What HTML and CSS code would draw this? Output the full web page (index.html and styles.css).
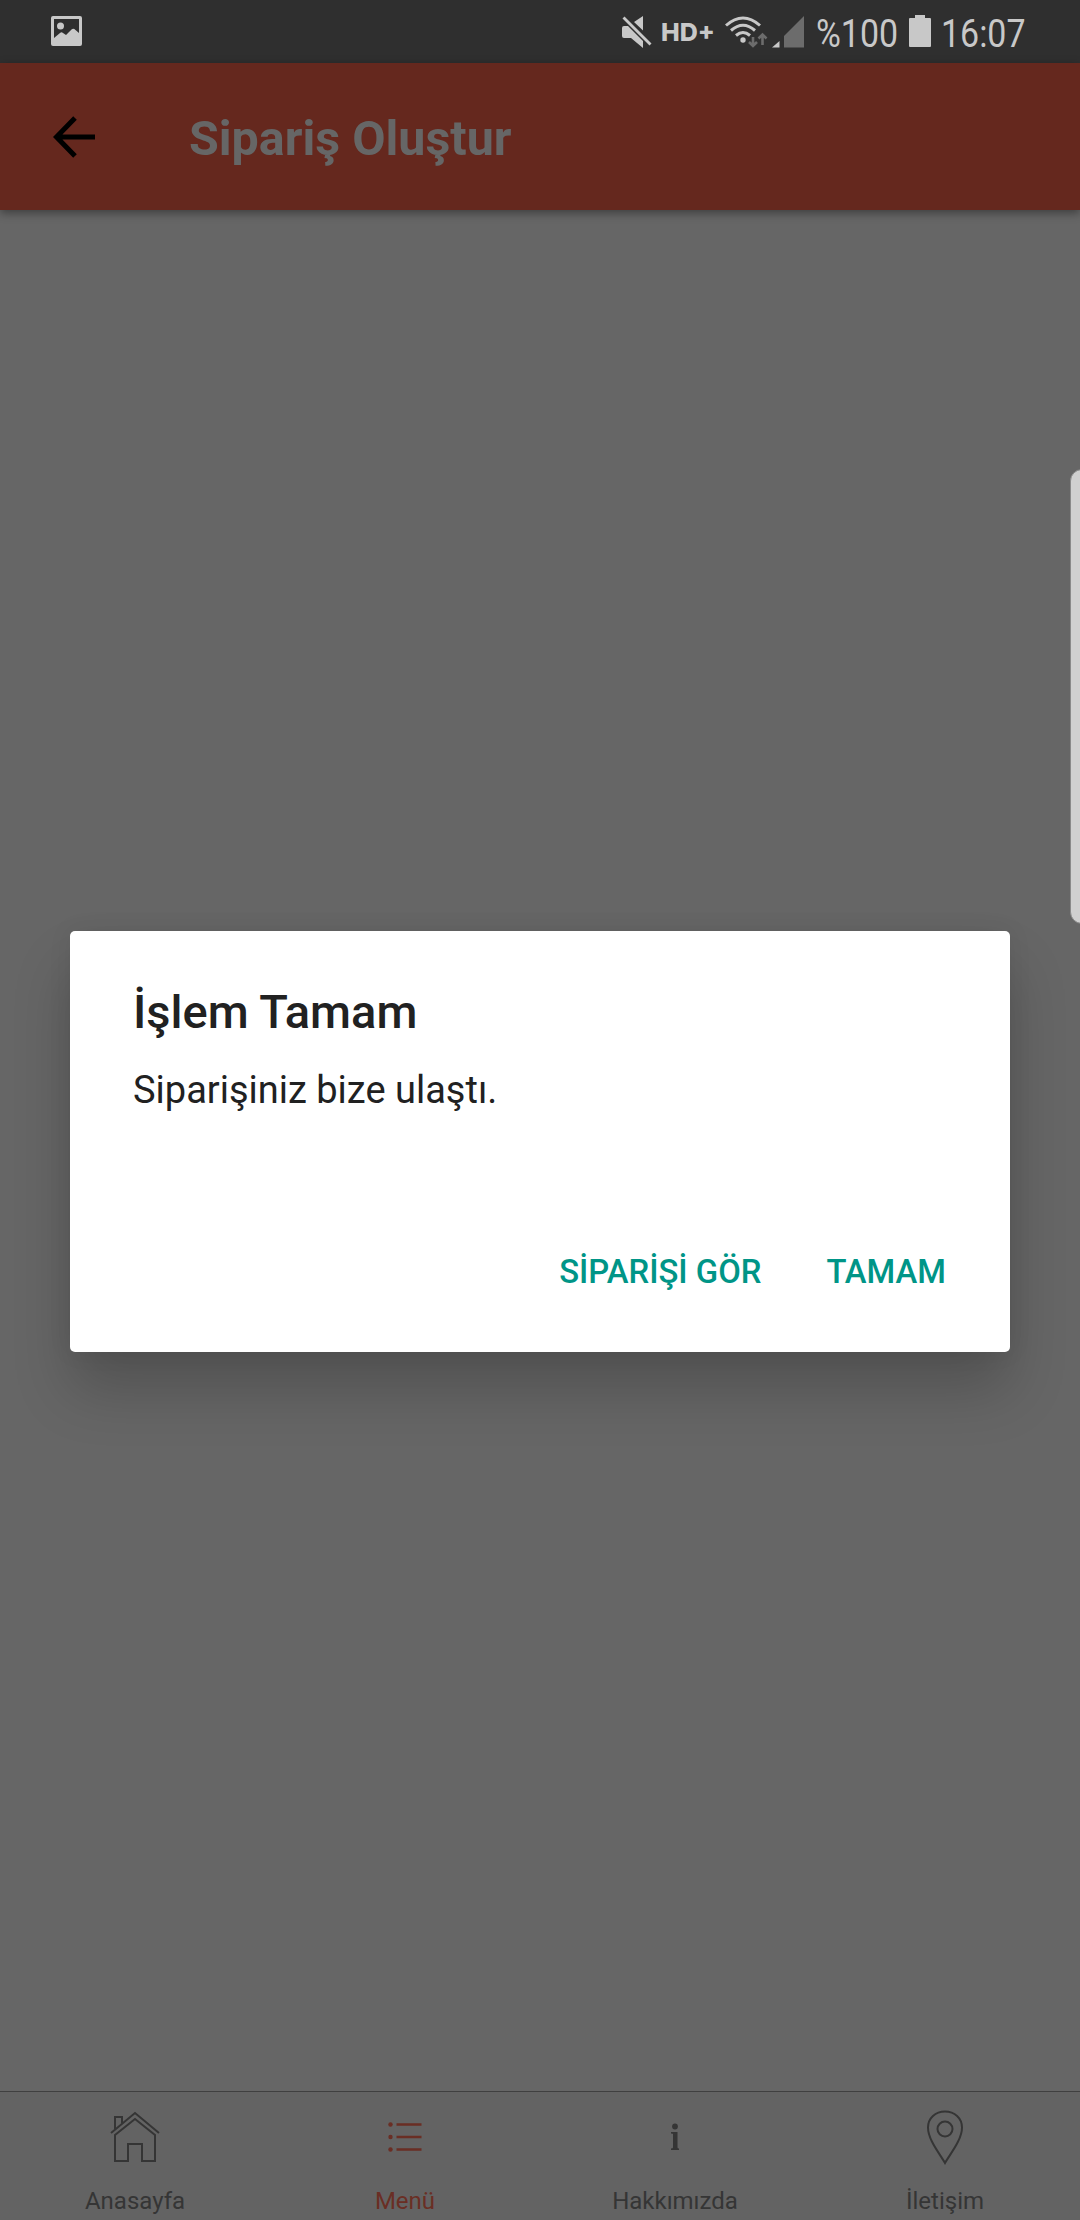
FILE: index.html
```html
<!DOCTYPE html>
<html lang="tr">
<head>
<meta charset="utf-8">
<title>Sipariş Oluştur</title>
<link rel="stylesheet" href="styles.css">
</head>
<body>
<div class="screen">
  <div class="status-bar">
    <svg class="icon-picture" width="31" height="30" viewBox="0 0 31 30"><path fill-rule="evenodd" d="M2 0H29Q31 0 31 2V28Q31 30 29 30H2Q0 30 0 28V2Q0 0 2 0ZM3 3V22L9 17Q10.500 15.500 12 17L15 19L20.500 13.500Q22.500 12 24.500 14L28 17V3Z"/><circle cx="9.500" cy="10" r="3.500"/></svg>
    <div class="status-right">
      <svg class="icon-mute" width="30" height="32" viewBox="0 0 30 32"><path d="M0 12Q0 10 2 10H6L21 25V32L9 22H2Q0 22 0 20ZM12 6L21 0V14.500Z"/><path d="M1.500 1.500L28.500 28.500" fill="none" stroke="#c8c8c8" stroke-width="2.800"/></svg>
      <span class="hd">HD+</span>
      <svg class="icon-wifi" width="43" height="32" viewBox="0 0 43 32"><g fill="none" stroke="#c8c8c8" stroke-width="3"><path d="M1 9.500Q18 -5.500 35 9.500"/><path d="M6 14.500Q18 4 30 14.500"/><path d="M11 19.500Q18 13.500 25 19.500"/></g><circle cx="18" cy="24" r="2.700"/><g fill="none" stroke="#6c6c6c" stroke-width="2.600"><path d="M28 21V30M24 26L28 30L32 26M37.500 29V19M33.500 22.500L37.500 18.500L41.500 22.500"/></g></svg>
      <svg class="icon-signal" width="32" height="32" viewBox="0 0 32 32"><path d="M0 31.500L7.500 25V31.500Z"/><path fill="#6c6c6c" d="M12 31.500V20L32 0V31.500Z"/></svg>
      <span class="battery-text"><span class="narrow">%100</span></span>
      <svg class="icon-battery" width="22" height="32" viewBox="0 0 22 32"><path d="M6 0H16V3H21Q22 3 22 4V31Q22 32 21 32H1Q0 32 0 31V4Q0 3 1 3H6Z"/></svg>
      <span class="clock"><span class="narrow">16:07</span></span>
    </div>
  </div>
  <header class="app-bar">
    <svg class="icon-back" width="42" height="42" viewBox="0 0 42 42"><path d="M22 2L3.500 21L22 40M3 21H42" fill="none" stroke="#000" stroke-width="5"/></svg>
    <h1 class="app-title">Sipariş Oluştur</h1>
  </header>
  <main class="content"></main>
  <nav class="tabs">
    <div class="tab">
      <div class="tab-icon"><svg width="50" height="52" viewBox="0 0 50 52" fill="none" stroke="#353535" stroke-width="2"><path d="M1 22L25 2L49 22M5 18V6H12V12M5 24V50H18V33H32V50H45V24L25 8Z"/></svg></div>
      <span class="tab-label">Anasayfa</span>
    </div>
    <div class="tab active">
      <div class="tab-icon"><svg width="34" height="32" viewBox="0 0 34 32"><g fill="#6a2e24"><circle cx="2.500" cy="3.500" r="2.200"/><circle cx="2.500" cy="16" r="2.200"/><circle cx="2.500" cy="28.500" r="2.200"/></g><path d="M8.500 3.500H33.500M8.500 16H33.500M8.500 28.500H33.500" stroke="#6a2e24" stroke-width="2.500"/></svg></div>
      <span class="tab-label">Menü</span>
    </div>
    <div class="tab">
      <div class="tab-icon"><svg width="10" height="28" viewBox="0 0 10 28" fill="#353535"><circle cx="5" cy="3.500" r="2.900"/><path d="M1 9H7.500V24.500Q7.500 25.500 9 25.500V27H1V25.500Q3 25.500 3 24.500V11Q3 10.500 1 10.500Z"/></svg></div>
      <span class="tab-label">Hakkımızda</span>
    </div>
    <div class="tab">
      <div class="tab-icon"><svg width="38" height="56" viewBox="0 0 38 56" fill="none" stroke="#353535" stroke-width="2"><path d="M19 54C14 45 2 31 2 18.500C2 9 9.500 2.500 19 2.500S36 9 36 18.500C36 31 24 45 19 54Z"/><circle cx="19" cy="20" r="7.500"/></svg></div>
      <span class="tab-label">İletişim</span>
    </div>
  </nav>
  <div class="overlay">
    <section class="dialog">
      <h2 class="dialog-title">İşlem Tamam</h2>
      <p class="dialog-message">Siparişiniz bize ulaştı.</p>
      <div class="dialog-actions">
        <span class="action">SİPARİŞİ GÖR</span>
        <span class="action">TAMAM</span>
      </div>
    </section>
  </div>
  <div class="edge-handle"></div>
</div>
</body>
</html>
```
FILE: styles.css
```css
* { box-sizing: border-box; }
body { margin: 0; font-family: Roboto, sans-serif; background: #666; }
h1, h2, p { margin: 0; }
svg { display: block; flex: none; }
.screen { position: relative; display: flex; flex-direction: column; width: 1080px; height: 2220px; overflow: hidden; background: #666; }

.status-bar { display: flex; justify-content: space-between; align-items: flex-start; height: 63px; padding: 0 54px 0 51px; background: #2f2f2f; color: #c8c8c8; fill: #c8c8c8; }
.status-bar svg { margin-top: 16px; }
.status-right { display: flex; width: 405px; margin-right: -1px; white-space: nowrap; }
.hd { width: 54px; margin: 17px 0 0 9px; font-family: Inter, sans-serif; font-size: 25px; line-height: 30px; font-weight: 800; }
.icon-wifi { margin-left: 10px; }
.icon-signal { margin-left: 4px; }
.battery-text { width: 82px; margin-left: 12px; }
.status-bar .icon-battery { margin: 15px 0 0 11px; }
.clock { width: 82px; margin-left: 10px; }
.narrow { display: inline-block; margin-top: 11px; font-size: 39px; line-height: 46px; transform: scaleX(.87); transform-origin: left; }

.app-bar { position: relative; display: flex; align-items: center; height: 147px; padding: 0 53px; background: #65281e; box-shadow: 0 3px 9px rgba(0, 0, 0, .4); }
.app-title { margin: 5px 0 0 94px; font-size: 48.4px; line-height: 56px; font-weight: 700; color: #666; white-space: nowrap; }
.content { flex: 1; }

.tabs { display: grid; grid-template-columns: repeat(4, 1fr); height: 129px; border-top: 1px solid #404040; background: #636363; color: #353535; }
.tab { display: flex; flex-direction: column; align-items: center; }
.tab-icon { display: flex; align-items: center; justify-content: center; height: 90px; }
.tab-label { font-size: 24px; line-height: 28px; margin-top: 5px; white-space: nowrap; }
.active { color: #6a2e24; }

.overlay { position: absolute; inset: 63px 0 0; display: flex; align-items: center; justify-content: center; }
.dialog { display: flex; flex-direction: column; width: 940px; height: 421px; padding: 53px 64px 60px 63px; border-radius: 5px; background: #fff; color: #212121; box-shadow: 0 38px 58px rgba(0, 0, 0, .2), 0 0 24px rgba(0, 0, 0, .07); }
.dialog-title { font-size: 47px; line-height: 56px; font-weight: 500; }
.dialog-message { margin-top: 27px; font-size: 38px; line-height: 46px; }
.dialog-actions { display: flex; justify-content: flex-end; gap: 65px; margin-top: auto; font-size: 32.8px; line-height: 40px; font-weight: 500; color: #009587; }

.edge-handle { position: absolute; left: 1070px; top: 469px; width: 24px; height: 455px; border: 1px solid #8a8a8a; border-radius: 14px; background: #d0d0d0; }
```
